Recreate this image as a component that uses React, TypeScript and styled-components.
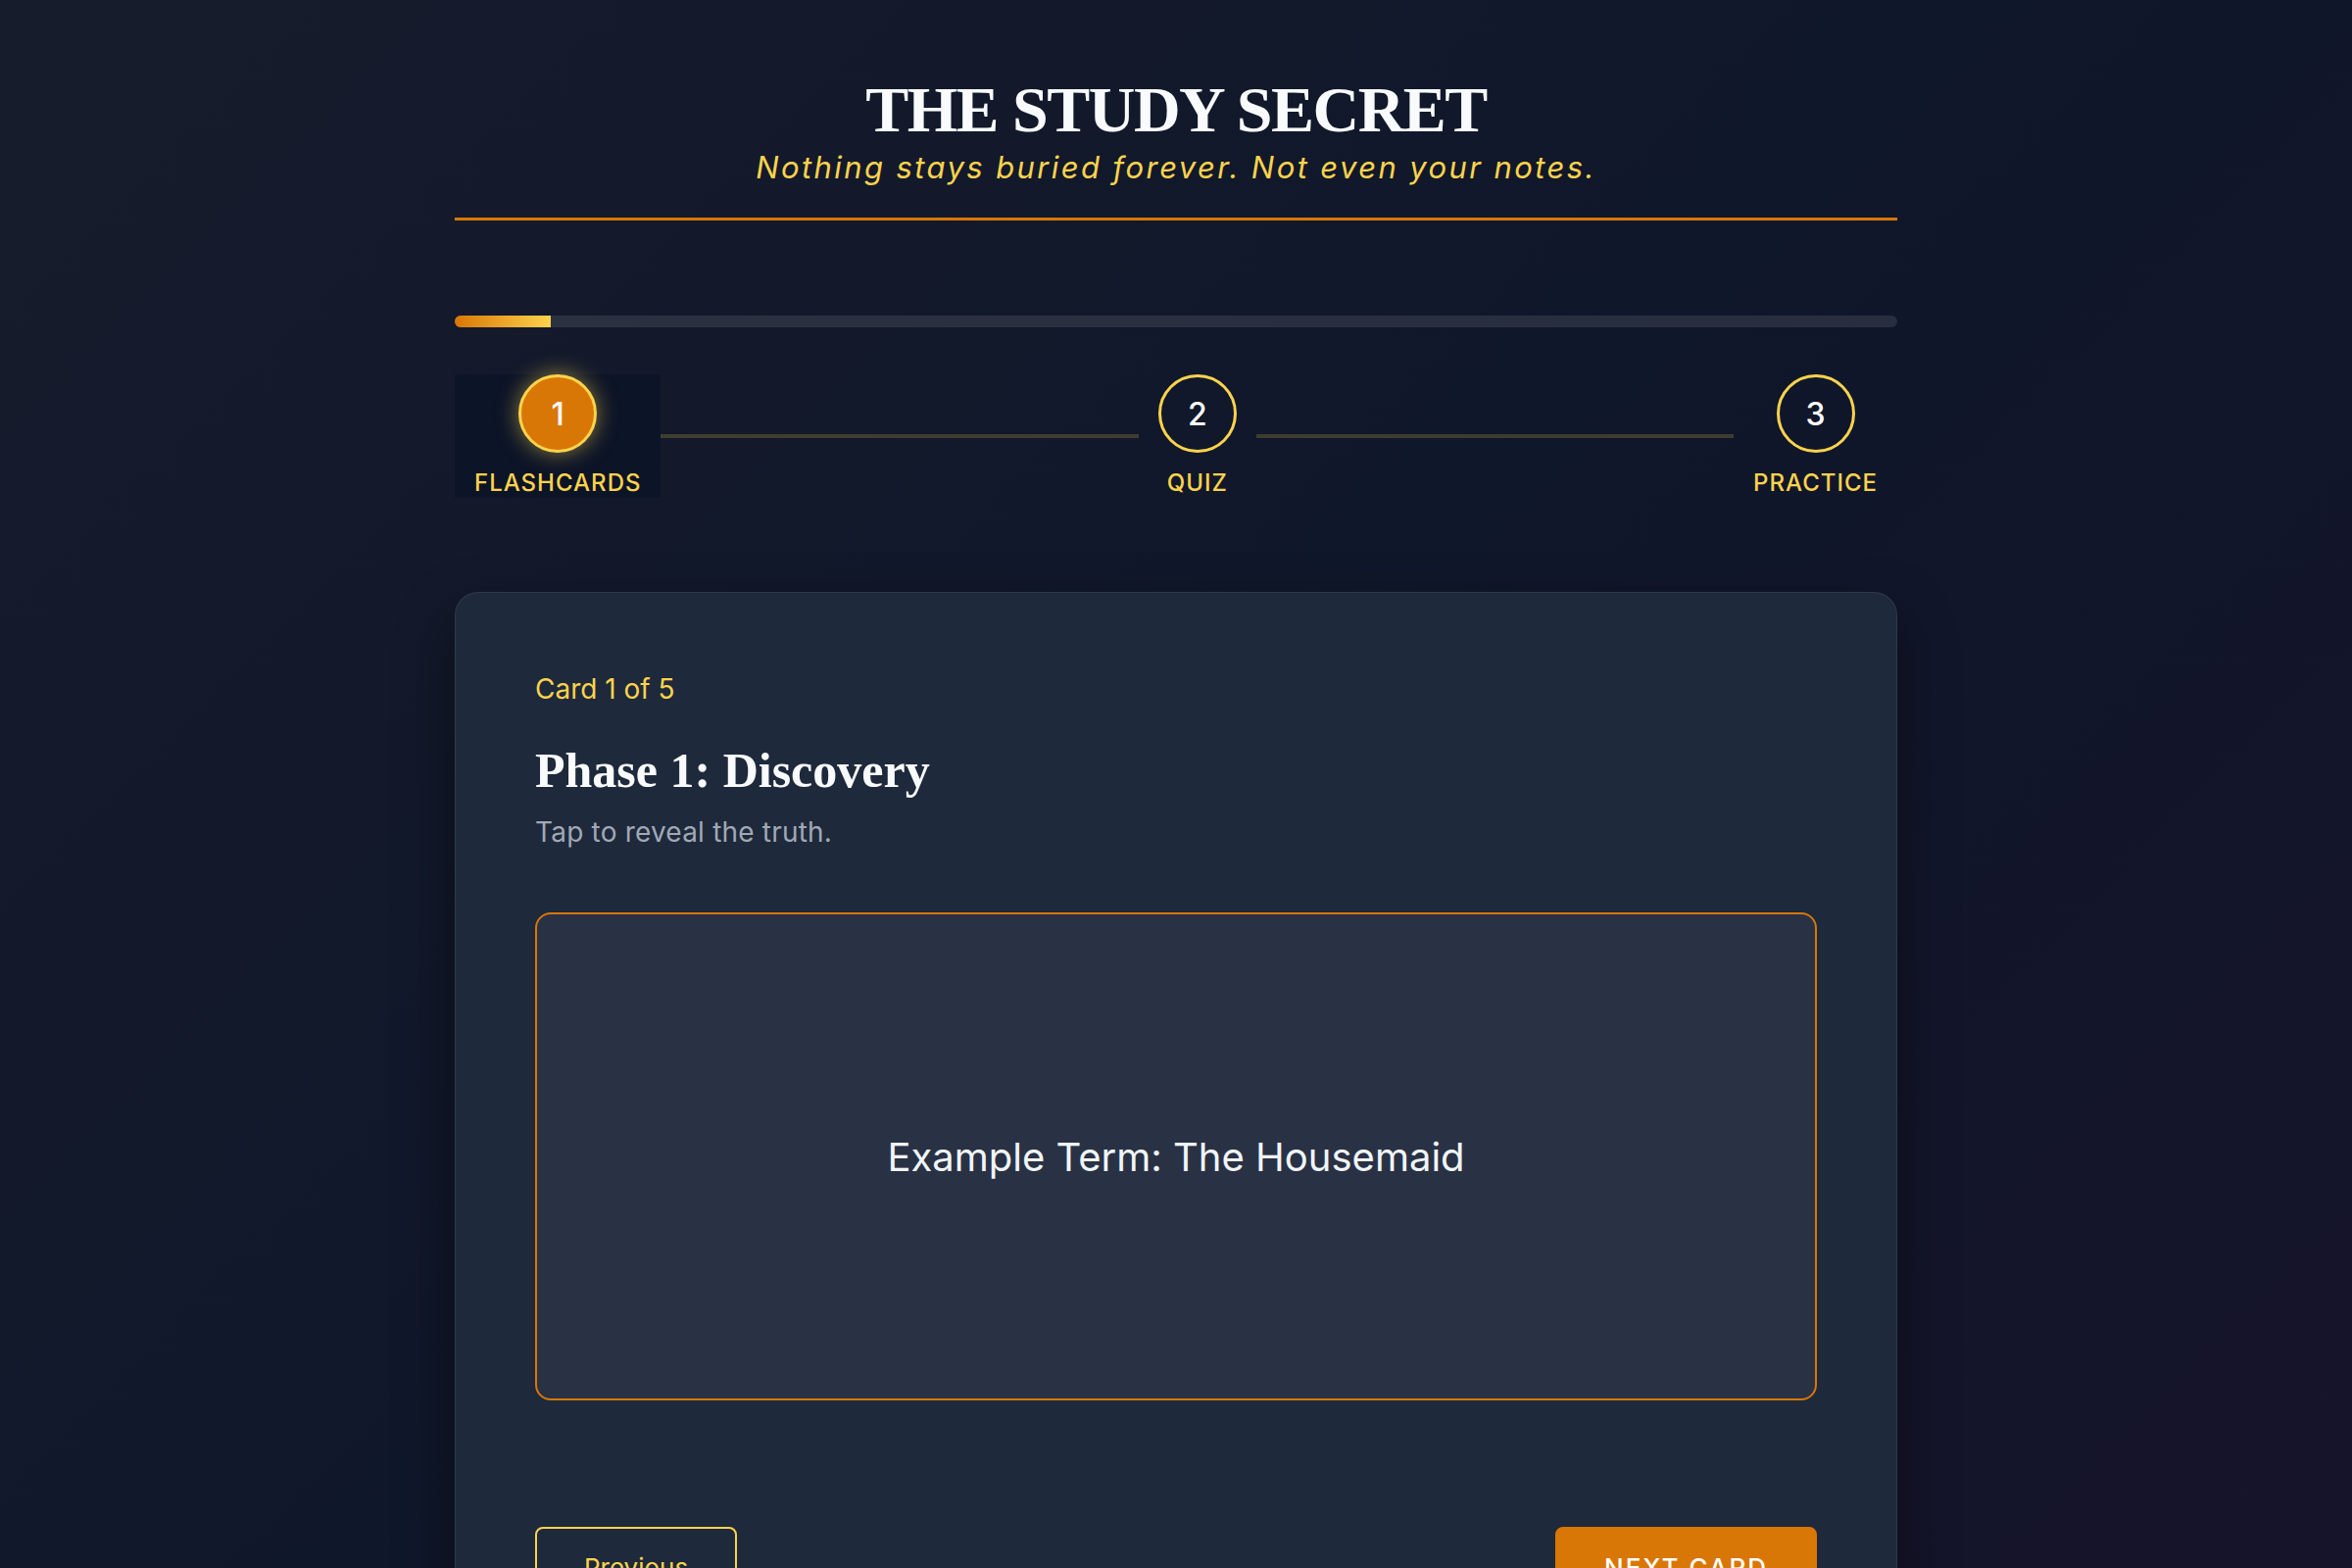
import styled, { createGlobalStyle } from "styled-components";

const GlobalStyle = createGlobalStyle`
  html, body {
    margin: 0;
    padding: 0;
  }
  body {
    min-height: 100vh;
    background: linear-gradient(135deg, #171c2c 0%, #0f172a 50%, #16142a 100%);
    background-attachment: fixed;
    font-family: Inter, "Noto Sans", sans-serif;
    color: #f8fafc;
  }
  * {
    box-sizing: border-box;
  }
`;

const Page = styled.div`
  padding: 79px 0 80px;
`;

const Container = styled.main`
  width: 1472px;
  margin: 0 auto;
`;

const Header = styled.header`
  text-align: center;
  padding-bottom: 33px;
  border-bottom: 3px solid #d97706;
`;

const Title = styled.h1`
  margin: 0;
  font-family: "Liberation Serif", "DejaVu Serif", serif;
  font-weight: 700;
  font-size: 66px;
  line-height: 66px;
  letter-spacing: -1.5px;
  color: #f8fafc;
`;

const Tagline = styled.p`
  margin: 8px 0 0;
  font-style: italic;
  font-size: 31px;
  line-height: 36px;
  letter-spacing: 2.4px;
  color: #fcd34d;
`;

const Track = styled.div`
  margin-top: 97px;
  height: 12px;
  border-radius: 6px;
  background: rgba(255, 255, 255, 0.1);
  overflow: hidden;
`;

const Fill = styled.div`
  height: 100%;
  background: linear-gradient(90deg, #d97706, #fcd34d);
`;

const Stepper = styled.nav`
  margin-top: 48px;
  display: flex;
  align-items: center;
`;

const Step = styled.div<{ $active?: boolean }>`
  display: flex;
  flex-direction: column;
  align-items: center;
  gap: 16px;
  padding: 0 20px 1px;
  background: ${(p) => (p.$active ? "#0c1427" : "transparent")};
`;

const Circle = styled.div<{ $active?: boolean }>`
  width: 80px;
  height: 80px;
  border-radius: 50%;
  border: 3px solid #fcd34d;
  display: flex;
  align-items: center;
  justify-content: center;
  font-size: 32px;
  font-weight: 500;
  color: #ffffff;
  background: ${(p) => (p.$active ? "#d97706" : "transparent")};
  box-shadow: ${(p) =>
    p.$active ? "0 0 22px rgba(252, 211, 77, 0.55)" : "none"};
`;

const StepLabel = styled.span`
  font-size: 24px;
  line-height: 29px;
  font-weight: 500;
  letter-spacing: 1px;
  text-transform: uppercase;
  color: #fcd34d;
`;

const Connector = styled.div`
  flex: 1;
  height: 4px;
  background: rgba(252, 211, 77, 0.2);
`;

const Card = styled.section`
  margin-top: 96px;
  padding: 81px;
  background: #1e293b;
  border: 1px solid rgba(255, 255, 255, 0.08);
  border-radius: 24px;
  box-shadow: 0 25px 60px rgba(0, 0, 0, 0.45);
`;

const CardCount = styled.div`
  font-size: 28px;
  line-height: 34px;
  color: #fcd34d;
`;

const PhaseTitle = styled.h2`
  margin: 36px 0 0;
  font-family: "Liberation Serif", "DejaVu Serif", serif;
  font-weight: 700;
  font-size: 50px;
  line-height: 60px;
  color: #f8fafc;
`;

const Hint = styled.p`
  margin: 16px 0 0;
  font-size: 28px;
  line-height: 34px;
  letter-spacing: 0.2px;
  color: #a1a8b5;
`;

const Flashcard = styled.div`
  margin-top: 65px;
  height: 498px;
  display: flex;
  align-items: center;
  justify-content: center;
  background: #293245;
  border: 2px solid #d97706;
  border-radius: 16px;
  font-size: 40px;
  color: #f1f5f9;
  cursor: pointer;
`;

const Actions = styled.div`
  margin-top: 129px;
  display: flex;
  justify-content: space-between;
`;

const Button = styled.button<{ $primary?: boolean }>`
  font-family: Inter, "Noto Sans", sans-serif;
  font-size: 26px;
  line-height: 32px;
  padding: 24px 48px;
  border-radius: 8px;
  border: 2px solid ${(p) => (p.$primary ? "#d97706" : "#fcd34d")};
  background: ${(p) => (p.$primary ? "#d97706" : "transparent")};
  color: ${(p) => (p.$primary ? "#ffffff" : "#fcd34d")};
  font-weight: ${(p) => (p.$primary ? 500 : 400)};
  letter-spacing: ${(p) => (p.$primary ? "2px" : "0")};
  text-transform: ${(p) => (p.$primary ? "uppercase" : "none")};
  cursor: pointer;
`;

const steps = [
  { n: 1, label: "Flashcards" },
  { n: 2, label: "Quiz" },
  { n: 3, label: "Practice" },
];

export default function App() {
  const current = 1;
  const progress = 100 / 15;

  return (
    <Page>
      <GlobalStyle />
      <Container>
        <Header>
          <Title>THE STUDY SECRET</Title>
          <Tagline>Nothing stays buried forever. Not even your notes.</Tagline>
        </Header>

        <Track>
          <Fill style={{ width: `${progress}%` }} />
        </Track>

        <Stepper>
          {steps.map((s, i) => (
            <>
              {i > 0 && <Connector key={`c${s.n}`} />}
              <Step key={s.n} $active={s.n === current}>
                <Circle $active={s.n === current}>{s.n}</Circle>
                <StepLabel>{s.label}</StepLabel>
              </Step>
            </>
          ))}
        </Stepper>

        <Card>
          <CardCount>Card 1 of 5</CardCount>
          <PhaseTitle>Phase 1: Discovery</PhaseTitle>
          <Hint>Tap to reveal the truth.</Hint>
          <Flashcard>Example Term: The Housemaid</Flashcard>
          <Actions>
            <Button>Previous</Button>
            <Button $primary>Next Card</Button>
          </Actions>
        </Card>
      </Container>
    </Page>
  );
}
